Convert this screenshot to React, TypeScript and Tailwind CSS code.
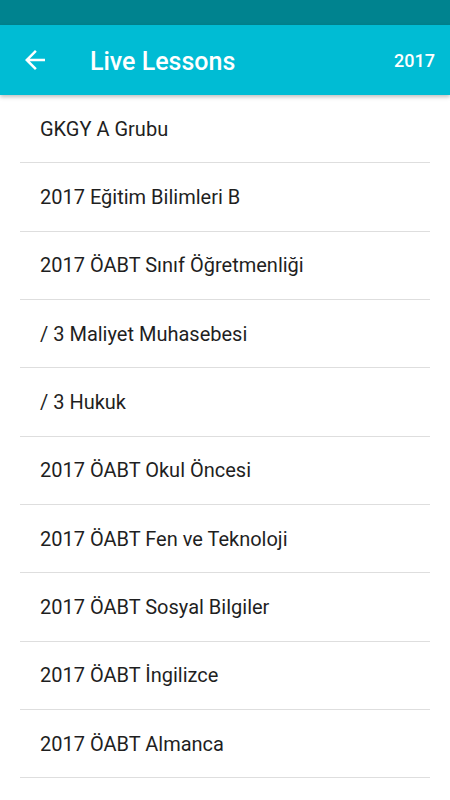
import React from "react";

const items = [
  "GKGY A Grubu",
  "2017 Eğitim Bilimleri B",
  "2017 ÖABT Sınıf Öğretmenliği",
  "/ 3 Maliyet Muhasebesi",
  "/ 3 Hukuk",
  "2017 ÖABT Okul Öncesi",
  "2017 ÖABT Fen ve Teknoloji",
  "2017 ÖABT Sosyal Bilgiler",
  "2017 ÖABT İngilizce",
  "2017 ÖABT Almanca",
];

export default function App() {
  return (
    <div
      className="w-[450px] h-[800px] bg-white overflow-hidden flex flex-col"
      style={{ fontFamily: "Roboto, 'Noto Sans', sans-serif" }}
    >
      <div className="h-[25px] bg-[#00838f] shrink-0" />
      <div className="h-[70px] bg-[#00bcd4] shrink-0 flex items-center relative z-10 shadow-[0_2px_4px_rgba(0,0,0,0.25)]">
        <div className="w-[90px] h-full flex items-center pl-[20px]">
          <svg width="30" height="30" viewBox="0 0 24 24" fill="white">
            <path d="M20 11H7.83l5.59-5.59L12 4l-8 8 8 8 1.41-1.41L7.83 13H20v-2z" />
          </svg>
        </div>
        <div className="flex-1 text-white text-[25px] font-medium leading-none pt-[2px]">Live Lessons</div>
        <div className="pr-[15px] text-white text-[18px] font-medium leading-none pt-[2px]">2017</div>
      </div>
      <div className="flex flex-col px-[20px]">
        {items.map((t) => (
          <div key={t} className="flex flex-col">
            <div className="h-[67.33px] flex items-center pl-[20px] text-[20px] font-normal text-[#1f1f1f]">
              {t}
            </div>
            <div className="h-px bg-[#dedede]" />
          </div>
        ))}
      </div>
    </div>
  );
}
